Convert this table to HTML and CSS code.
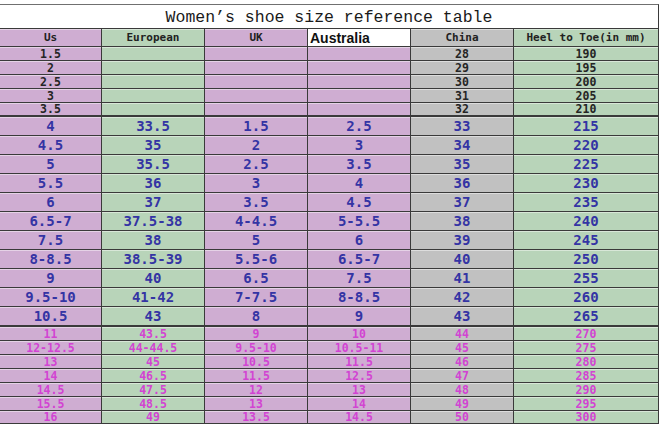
FILE: index.html
```html
<!DOCTYPE html>
<html>
<head>
<meta charset="utf-8">
<link rel="stylesheet" href="styles.css">
</head>
<body>
<div class="sheet">
  <div class="title">Women’s shoe size reference table</div>
  <div class="row head">
    <div class="cell p">Us</div>
    <div class="cell g">European</div>
    <div class="cell p">UK</div>
    <div class="cell w aus">Australia</div>
    <div class="cell y">China</div>
    <div class="cell g">Heel to Toe(in mm)</div>
  </div>

  <div class="row sm"><div class="cell p">1.5</div><div class="cell g"></div><div class="cell p"></div><div class="cell p"></div><div class="cell y">28</div><div class="cell g">190</div></div>
  <div class="row sm"><div class="cell p">2</div><div class="cell g"></div><div class="cell p"></div><div class="cell p"></div><div class="cell y">29</div><div class="cell g">195</div></div>
  <div class="row sm"><div class="cell p">2.5</div><div class="cell g"></div><div class="cell p"></div><div class="cell p"></div><div class="cell y">30</div><div class="cell g">200</div></div>
  <div class="row sm"><div class="cell p">3</div><div class="cell g"></div><div class="cell p"></div><div class="cell p"></div><div class="cell y">31</div><div class="cell g">205</div></div>
  <div class="row sm thick"><div class="cell p">3.5</div><div class="cell g"></div><div class="cell p"></div><div class="cell p"></div><div class="cell y">32</div><div class="cell g">210</div></div>

  <div class="row big"><div class="cell p">4</div><div class="cell g">33.5</div><div class="cell p">1.5</div><div class="cell p">2.5</div><div class="cell y">33</div><div class="cell g">215</div></div>
  <div class="row big"><div class="cell p">4.5</div><div class="cell g">35</div><div class="cell p">2</div><div class="cell p">3</div><div class="cell y">34</div><div class="cell g">220</div></div>
  <div class="row big"><div class="cell p">5</div><div class="cell g">35.5</div><div class="cell p">2.5</div><div class="cell p">3.5</div><div class="cell y">35</div><div class="cell g">225</div></div>
  <div class="row big"><div class="cell p">5.5</div><div class="cell g">36</div><div class="cell p">3</div><div class="cell p">4</div><div class="cell y">36</div><div class="cell g">230</div></div>
  <div class="row big"><div class="cell p">6</div><div class="cell g">37</div><div class="cell p">3.5</div><div class="cell p">4.5</div><div class="cell y">37</div><div class="cell g">235</div></div>
  <div class="row big"><div class="cell p">6.5-7</div><div class="cell g">37.5-38</div><div class="cell p">4-4.5</div><div class="cell p">5-5.5</div><div class="cell y">38</div><div class="cell g">240</div></div>
  <div class="row big"><div class="cell p">7.5</div><div class="cell g">38</div><div class="cell p">5</div><div class="cell p">6</div><div class="cell y">39</div><div class="cell g">245</div></div>
  <div class="row big"><div class="cell p">8-8.5</div><div class="cell g">38.5-39</div><div class="cell p">5.5-6</div><div class="cell p">6.5-7</div><div class="cell y">40</div><div class="cell g">250</div></div>
  <div class="row big"><div class="cell p">9</div><div class="cell g">40</div><div class="cell p">6.5</div><div class="cell p">7.5</div><div class="cell y">41</div><div class="cell g">255</div></div>
  <div class="row big"><div class="cell p">9.5-10</div><div class="cell g">41-42</div><div class="cell p">7-7.5</div><div class="cell p">8-8.5</div><div class="cell y">42</div><div class="cell g">260</div></div>
  <div class="row big last"><div class="cell p">10.5</div><div class="cell g">43</div><div class="cell p">8</div><div class="cell p">9</div><div class="cell y">43</div><div class="cell g">265</div></div>

  <div class="row pk"><div class="cell p">11</div><div class="cell g">43.5</div><div class="cell p">9</div><div class="cell p">10</div><div class="cell y">44</div><div class="cell g">270</div></div>
  <div class="row pk"><div class="cell p">12-12.5</div><div class="cell g">44-44.5</div><div class="cell p">9.5-10</div><div class="cell p">10.5-11</div><div class="cell y">45</div><div class="cell g">275</div></div>
  <div class="row pk"><div class="cell p">13</div><div class="cell g">45</div><div class="cell p">10.5</div><div class="cell p">11.5</div><div class="cell y">46</div><div class="cell g">280</div></div>
  <div class="row pk"><div class="cell p">14</div><div class="cell g">46.5</div><div class="cell p">11.5</div><div class="cell p">12.5</div><div class="cell y">47</div><div class="cell g">285</div></div>
  <div class="row pk"><div class="cell p">14.5</div><div class="cell g">47.5</div><div class="cell p">12</div><div class="cell p">13</div><div class="cell y">48</div><div class="cell g">290</div></div>
  <div class="row pk"><div class="cell p">15.5</div><div class="cell g">48.5</div><div class="cell p">13</div><div class="cell p">14</div><div class="cell y">49</div><div class="cell g">295</div></div>
  <div class="row pk end"><div class="cell p">16</div><div class="cell g">49</div><div class="cell p">13.5</div><div class="cell p">14.5</div><div class="cell y">50</div><div class="cell g">300</div></div>
</div>
</body>
</html>
```

FILE: styles.css
```css
html, body {
  margin: 0;
  padding: 0;
  background: #ffffff;
}

.sheet {
  width: 659px;
  padding-top: 4px;
}

.title {
  box-sizing: border-box;
  height: 25px;
  border-top: 1px solid #707070;
  border-right: 1px solid #3a3a3a;
  border-bottom: 1px solid #3a3a3a;
  display: flex;
  align-items: center;
  justify-content: center;
  padding-top: 2px;
  font-family: "Liberation Mono", "DejaVu Sans Mono", monospace;
  font-size: 16.5px;
  color: #1a1a1a;
  background: #ffffff;
}

.row {
  box-sizing: border-box;
  display: grid;
  grid-template-columns: 102px 103px 103px 103px 103px 145px;
  border-bottom: 1px solid #3a3a3a;
}

.cell {
  box-sizing: border-box;
  border-right: 1px solid #3a3a3a;
  display: flex;
  align-items: center;
  justify-content: center;
  box-shadow: inset 0 1px 0 rgba(255, 255, 255, 0.45);
  font-family: "DejaVu Sans Mono", "Liberation Mono", monospace;
  font-weight: bold;
  white-space: nowrap;
  overflow: hidden;
}

.p { background: #cfadd2; }
.g { background: #b8d4b9; }
.y { background: #c1c1c1; }
.w { background: #ffffff; }

.head {
  height: 18px;
}
.head .cell {
  font-size: 11px;
  color: #222222;
}
.head .aus {
  justify-content: flex-start;
  padding-left: 2px;
  font-family: "Liberation Sans", Arial, sans-serif;
  font-size: 14px;
  color: #111111;
  box-shadow: none;
}

.sm {
  height: 14px;
}
.sm .cell {
  font-size: 11.5px;
  color: #252525;
}

.big {
  height: 19px;
}
.big .cell {
  font-size: 14px;
  color: #3434a4;
}

.pk {
  height: 14px;
}
.pk .cell {
  font-size: 11.5px;
  color: #d244d2;
}

.thick {
  border-bottom-width: 2px;
}

.big.last {
  height: 20px;
  border-bottom-width: 2px;
}

.pk.end {
  height: 13px;
}
```
